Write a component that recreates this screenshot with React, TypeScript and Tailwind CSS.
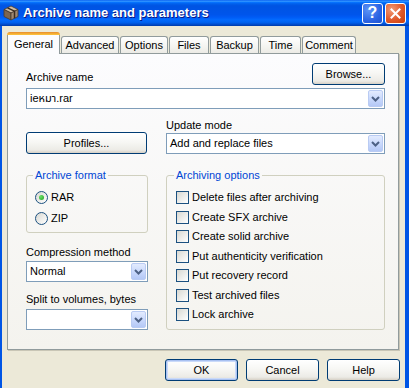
import React from "react";

function Chevron() {
  return (
    <svg width="9" height="6" viewBox="0 0 9 6">
      <path d="M1 1 L4.5 4.5 L8 1" fill="none" stroke="#4D6185" strokeWidth="2" />
    </svg>
  );
}

function Combo({ text, className = "" }: { text?: string; className?: string }) {
  return (
    <div className={`h-[21px] border border-[#7F9DB9] bg-white flex items-center ${className}`}>
      <span className="flex-1 pl-[3px] text-[11px] leading-[13px] text-black whitespace-nowrap overflow-hidden">{text}</span>
      <div className="w-[15px] h-[17px] mr-px rounded-[2px] border border-[#B9CBF3] bg-[linear-gradient(#E3EBFE,#C8D8FC_55%,#B4C8F6)] flex items-center justify-center">
        <Chevron />
      </div>
    </div>
  );
}

function Btn({ children, className = "", def = false }: { children: React.ReactNode; className?: string; def?: boolean }) {
  return (
    <div
      className={`h-[22px] rounded-[3px] border border-[#003C74] bg-[linear-gradient(#FFFFFF,#F7F7F4_45%,#ECEBE6_85%,#D6D0C5)] flex items-center justify-center text-[11px] leading-[13px] text-black ${
        def ? "shadow-[inset_0_0_0_1px_#A9C1F1,inset_0_0_0_2px_#CADAF9]" : ""
      } ${className}`}
    >
      {children}
    </div>
  );
}

function Radio({ label, checked = false }: { label: string; checked?: boolean }) {
  return (
    <div className="h-[13px] flex items-center">
      <div className="w-[13px] h-[13px] rounded-full border border-[#1C5180] bg-[linear-gradient(135deg,#D8D8D2,#FFFFFF)] flex items-center justify-center">
        {checked && <div className="w-[5px] h-[5px] rounded-full bg-[radial-gradient(circle_at_35%_35%,#6BE067,#21A121)]" />}
      </div>
      <span className="ml-[3px] text-[11px] leading-[13px]">{label}</span>
    </div>
  );
}

function Check({ label }: { label: string }) {
  return (
    <div className="h-[13px] flex items-center">
      <div className="w-[13px] h-[13px] shrink-0 border border-[#1C5180] bg-[linear-gradient(135deg,#D8D8D2,#FFFFFF)]" />
      <span className="ml-[3px] text-[11px] leading-[13px] whitespace-nowrap">{label}</span>
    </div>
  );
}

function Tab({ label, className = "" }: { label: string; className?: string }) {
  return (
    <div
      className={`h-[17px] rounded-t-[3px] border border-b-0 border-[#919B9C] bg-[linear-gradient(#FFFFFF,#F4F4F0_60%,#ECEBE6)] flex items-center justify-center text-[11px] leading-[13px] ${className}`}
    >
      {label}
    </div>
  );
}

function WinIcon() {
  return (
    <svg width="16" height="16" viewBox="0 0 16 16">
      <path d="M8 1 L15 4.5 L8 8 L1 4.5 Z" fill="#CDBBA4" stroke="#4A3A2A" strokeWidth="0.8" />
      <path d="M1 4.5 L8 8 L8 15 L1 11.5 Z" fill="#7D6550" stroke="#4A3A2A" strokeWidth="0.8" />
      <path d="M15 4.5 L8 8 L8 15 L15 11.5 Z" fill="#A08872" stroke="#4A3A2A" strokeWidth="0.8" />
      <path d="M4.5 2.8 L11.5 6.2 L11.5 13.2" fill="none" stroke="#3A2C20" strokeWidth="1.5" />
    </svg>
  );
}

export default function App() {
  return (
    <div className="w-[409px] h-[388px] flex flex-col bg-[#ECE9D8] overflow-hidden text-black font-['Liberation_Sans','Noto_Sans_Thai','Noto_Sans',sans-serif]">
      {/* Title bar */}
      <div className="h-[26px] shrink-0 flex items-center bg-[linear-gradient(180deg,#0058EE_0%,#3593FF_4%,#288EFF_6%,#127DFF_8%,#036FFC_10%,#0262EE_14%,#0057E5_20%,#0054E3_24%,#0055EB_56%,#005BF5_66%,#026AFE_76%,#0062EF_86%,#0052D6_92%,#0045C0_96%,#003CA8_100%)]">
        <div className="ml-[3px] w-[16px] h-[16px] flex">
          <WinIcon />
        </div>
        <span className="ml-[4px] text-white font-bold text-[13px] leading-[16px] [text-shadow:1px_1px_0_#0A1883]">
          Archive name and parameters
        </span>
        <div className="ml-auto mr-[3px] flex gap-[2px]">
          <div className="w-[21px] h-[21px] rounded-[3px] border border-white bg-[radial-gradient(circle_at_30%_30%,#5E96F7,#2C64E3_60%,#1E52CF)] flex items-center justify-center text-white font-bold text-[16px] leading-[16px]">
            ?
          </div>
          <div className="w-[21px] h-[21px] rounded-[3px] border border-white bg-[radial-gradient(circle_at_30%_30%,#F19B76,#E0582A_55%,#C8400B)] flex items-center justify-center">
            <svg width="11" height="11" viewBox="0 0 11 11">
              <path d="M1.5 1.5 L9.5 9.5 M9.5 1.5 L1.5 9.5" stroke="white" strokeWidth="2" strokeLinecap="square" />
            </svg>
          </div>
        </div>
      </div>

      {/* Body */}
      <div className="flex-1 flex flex-col border-l-2 border-r-4 border-[#0055E5] pl-[5px] pt-[6px]">
        {/* Tabs */}
        <div className="flex items-end gap-[1px]">
          <div className="relative z-10 -mb-px w-[53px] h-[22px] rounded-t-[3px] overflow-hidden flex flex-col">
            <div className="h-[3px] bg-[linear-gradient(#E68B2C,#FFC73C)]" />
            <div className="flex-1 border-x border-[#919B9C] bg-[#FCFCFE] flex items-center justify-center text-[11px] leading-[13px] pb-[1px]">
              General
            </div>
          </div>
          <Tab label="Advanced" className="w-[58px]" />
          <Tab label="Options" className="w-[48px]" />
          <Tab label="Files" className="w-[40px]" />
          <Tab label="Backup" className="w-[49px]" />
          <Tab label="Time" className="w-[41px]" />
          <Tab label="Comment" className="w-[54px]" />
        </div>

        {/* Panel */}
        <div className="w-[392px] h-[297px] border border-[#919B9C] bg-[linear-gradient(#FCFCFE,#F4F3EE)] shadow-[1px_1px_0_#C9C6B6] pl-[18px] pr-[13px] pt-[9px] flex flex-col">
          <div className="flex items-end justify-between">
            <span className="text-[11px] leading-[13px] mb-px">Archive name</span>
            <Btn className="w-[73px]">Browse...</Btn>
          </div>
          <Combo text="ieหมา.rar" className="mt-[3px]" />

          <div className="grid grid-cols-[122px_219px] gap-x-[18px] mt-[10px]">
            <div className="flex items-end">
              <Btn className="w-[121px]">Profiles...</Btn>
            </div>
            <div className="flex flex-col">
              <span className="text-[11px] leading-[13px] mb-px">Update mode</span>
              <Combo text="Add and replace files" />
            </div>
          </div>

          <div className="grid grid-cols-[122px_219px] gap-x-[18px] mt-[15px]">
            <div className="flex flex-col">
              <fieldset className="border border-[#D0D0BF] rounded-[3px]">
                <legend className="ml-[6px] px-[2px] text-[#0046D5] text-[11px] leading-[13px]">Archive format</legend>
                <div className="pl-[8px] pt-[9px] pb-[7px] flex flex-col gap-[8px]">
                  <Radio label="RAR" checked />
                  <Radio label="ZIP" />
                </div>
              </fieldset>
              <span className="mt-[13px] text-[11px] leading-[13px]">Compression method</span>
              <Combo text="Normal" className="mt-[2px]" />
              <span className="mt-[11px] text-[11px] leading-[13px]">Split to volumes, bytes</span>
              <Combo className="mt-[3px]" />
            </div>
            <fieldset className="border border-[#D0D0BF] rounded-[3px]">
              <legend className="ml-[7px] px-[2px] text-[#0046D5] text-[11px] leading-[13px]">Archiving options</legend>
              <div className="pl-[9px] pt-[9px] pb-[7px] flex flex-col gap-[6.5px]">
                <Check label="Delete files after archiving" />
                <Check label="Create SFX archive" />
                <Check label="Create solid archive" />
                <Check label="Put authenticity verification" />
                <Check label="Put recovery record" />
                <Check label="Test archived files" />
                <Check label="Lock archive" />
              </div>
            </fieldset>
          </div>
        </div>

        {/* Bottom buttons */}
        <div className="mt-[9px] flex justify-end gap-[8px] pr-[5px]">
          <Btn className="w-[73px]" def>
            OK
          </Btn>
          <Btn className="w-[73px]">Cancel</Btn>
          <Btn className="w-[73px]">Help</Btn>
        </div>
      </div>
    </div>
  );
}
